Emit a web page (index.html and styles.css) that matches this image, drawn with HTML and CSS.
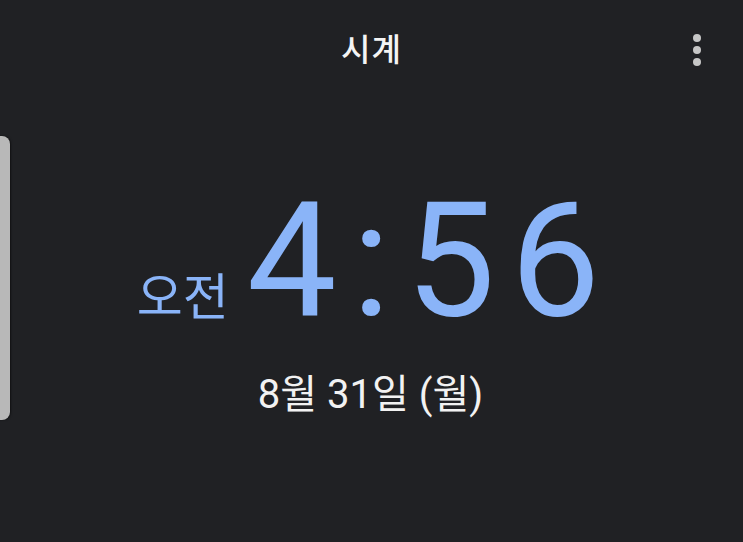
FILE: index.html
```html
<!DOCTYPE html>
<html lang="ko">
<head>
<meta charset="utf-8">
<link rel="stylesheet" href="styles.css">
</head>
<body>
<div class="screen">
  <div class="handle"></div>
  <header class="topbar">
    <div class="spacer"></div>
    <h1 class="title">시계</h1>
    <div class="actions">
      <span class="more"><i></i><i></i><i></i></span>
    </div>
  </header>
  <main class="clock">
    <div class="time-row">
      <span class="ampm">오전</span>
      <span class="time">4:56</span>
    </div>
    <div class="date">8월 31일 (월)</div>
  </main>
</div>
</body>
</html>
```
FILE: styles.css
```css
html, body {
  margin: 0;
  padding: 0;
  background: #202124;
}
.screen {
  position: relative;
  width: 743px;
  height: 542px;
  overflow: hidden;
  background: #202124;
  font-family: "Roboto", "Noto Sans CJK KR", sans-serif;
  color: #ffffff;
}
.handle {
  position: absolute;
  left: -8px;
  top: 136px;
  width: 18px;
  height: 284px;
  border-radius: 8px;
  background: #b8b8b8;
  box-shadow: 1px 0 2px rgba(0,0,0,0.5);
}
.topbar {
  display: grid;
  grid-template-columns: 1fr auto 1fr;
  align-items: center;
  height: 100px;
}
.title {
  margin: 0;
  font-size: 32px;
  font-weight: 500;
  line-height: 1;
  letter-spacing: 1px;
  color: #f4f4f4;
}
.actions {
  display: flex;
  justify-content: flex-end;
  padding-right: 42px;
}
.more {
  display: flex;
  flex-direction: column;
  gap: 4px;
}
.more i {
  display: block;
  width: 8px;
  height: 8px;
  border-radius: 50%;
  background: #c6c6c6;
}
.clock {
  display: flex;
  flex-direction: column;
  align-items: center;
}
.time-row {
  display: flex;
  align-items: baseline;
  gap: 18px;
  margin-top: 81px;
  margin-left: -6px;
  color: #8ab4f8;
}
.ampm {
  font-size: 50px;
  font-weight: 400;
  line-height: 1;
}
.time {
  font-size: 160px;
  font-weight: 400;
  line-height: 1;
  letter-spacing: 15px;
  margin-right: -15px;
}
.date {
  margin-top: 34px;
  margin-left: -2px;
  font-size: 40px;
  font-weight: 400;
  line-height: 1;
  color: #f2f2f2;
}
```
